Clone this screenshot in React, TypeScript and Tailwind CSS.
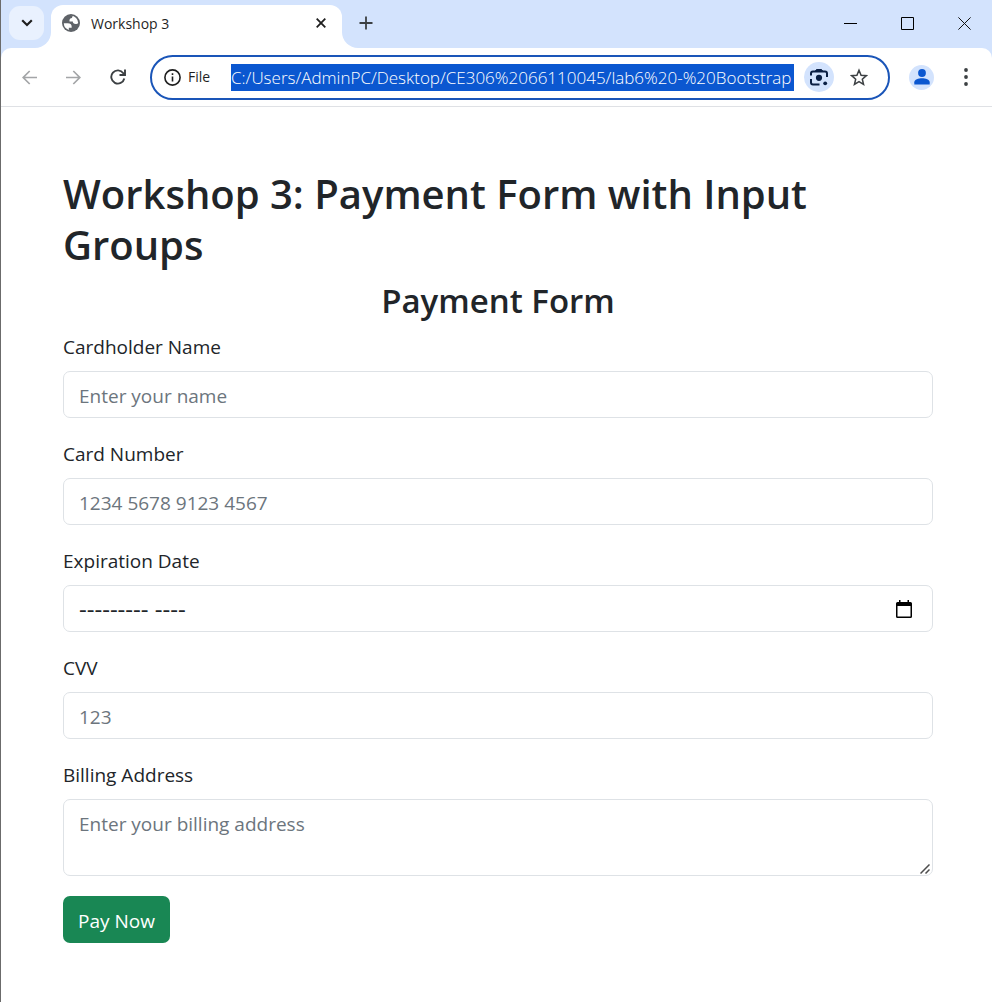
import React from "react";

const field =
  "block h-[47px] w-full rounded-[7px] border border-[#dee2e6] bg-white px-[15px] pt-[2px] text-[19px] leading-[30px] text-[#212529] placeholder:text-[#6c757d] outline-none";

function Field({ id, label, children }: { id: string; label: string; children: React.ReactNode }) {
  return (
    <div className="mb-5">
      <label htmlFor={id} className="mb-2 block text-[19px] leading-8">
        {label}
      </label>
      {children}
    </div>
  );
}

function TabStrip() {
  return (
    <div className="flex h-12 items-end bg-[#d3e3fd]">
      <button aria-label="Search tabs" className="relative z-10 mb-2 ml-2 flex h-[34px] w-[35px] items-center justify-center rounded-[11px] bg-[#e9f1fe]">
        <svg width="12" height="8" viewBox="0 0 12 8" fill="none" stroke="#1f1f1f" strokeWidth="2.2">
          <path d="M1.2 1.3 6 6l4.800-4.700" />
        </svg>
      </button>
      <div className="relative ml-[7px] flex h-[43px] w-[291px] items-start rounded-t-[12px] bg-white pt-2 pr-[11px] pl-[11px]">
        <div className="absolute bottom-0 -left-4 h-4 w-4 bg-white">
          <div className="h-4 w-4 rounded-br-[16px] bg-[#d3e3fd]" />
        </div>
        <div className="absolute -right-4 bottom-0 h-4 w-4 bg-white">
          <div className="h-4 w-4 rounded-bl-[16px] bg-[#d3e3fd]" />
        </div>
        <svg width="18" height="18" viewBox="0 0 18 18" className="mt-px">
          <circle cx="9" cy="9" r="9" fill="#5f6368" />
          <path
            d="M9.800 1.800C8.600 2.200 8.100 2.900 8.100 3.900c-2.200 0-3.300 1.300-3 4 .1.500.6.900 1.200.9H7.900c.2 1.900 1.300 2.700 3.300 2.700 1.500 0 2.700-.4 3.600-1.500l1.300.1A7.200 7.200 0 0 1 6.800 15.900V13.700h2.900c.4-3-1-4.500-4-4.600H1.800a7.200 7.200 0 0 1 8-7.300Z"
            fill="none"
          />
          <path
            d="M1.800 9.300H5.600c3 0 4.400 1.500 4.100 4.400H6.800v2.200A7.200 7.200 0 0 1 1.800 9.300ZM9 1.800a7.200 7.200 0 0 1 7.200 7.200c-.6.700-1.300 1-2.600 1-1.800 0-2.800-.8-2.800-2.400H7.500c-.3-2.400.6-3.600 2.500-3.600 0-.9.300-1.400.8-1.800Z"
            fill="#fff"
          />
        </svg>
        <span className="ml-[11px] flex-1 text-[14px] leading-[22px] text-[#1f1f1f]">Workshop 3</span>
        <button aria-label="Close tab" className="flex h-5 w-5 items-center justify-center">
          <svg width="10" height="10" viewBox="0 0 10 10" stroke="#1f1f1f" strokeWidth="1.800">
            <path d="m.7.7 8.600 8.600M9.300.7.7 9.300" />
          </svg>
        </button>
      </div>
      <button aria-label="New tab" className="mb-[15px] ml-[14px] flex h-5 w-5 items-center justify-center">
        <svg width="14" height="14" viewBox="0 0 14 14" stroke="#3c4043" strokeWidth="1.800">
          <path d="M7 .5v13M.5 7h13" />
        </svg>
      </button>
      <div className="mb-[11px] ml-auto flex">
        <button aria-label="Minimize" className="flex h-7 w-[57px] items-center justify-center">
          <svg width="13" height="13" viewBox="0 0 13 13" stroke="#000">
            <path d="M0 6.500h13" />
          </svg>
        </button>
        <button aria-label="Maximize" className="flex h-7 w-[57px] items-center justify-center">
          <svg width="13" height="13" viewBox="0 0 13 13" stroke="#000" fill="none">
            <path d="M.5.5h12v12H.5z" />
          </svg>
        </button>
        <button aria-label="Close" className="flex h-7 w-[56px] items-center justify-center">
          <svg width="13" height="13" viewBox="0 0 13 13" stroke="#111">
            <path d="m.4.4 12.200 12.200M12.600.4.4 12.600" />
          </svg>
        </button>
      </div>
    </div>
  );
}

function Toolbar() {
  return (
    <div className="bg-[#d3e3fd]">
      <div className="flex h-[59px] items-center rounded-t-[10px] border-b border-[#dfe1e5] bg-white pr-[14px] pl-4">
        <button aria-label="Back" className="flex h-6 w-6 items-center justify-center">
          <svg width="15" height="15" viewBox="0 0 15 15" fill="none" stroke="#a3a5a7" strokeWidth="1.700">
            <path d="M15 7.500H1.500M7.700 1 1.200 7.500 7.700 14" />
          </svg>
        </button>
        <button aria-label="Forward" className="ml-5 flex h-6 w-6 items-center justify-center">
          <svg width="15" height="15" viewBox="0 0 15 15" fill="none" stroke="#a3a5a7" strokeWidth="1.700">
            <path d="M0 7.500h13.500M7.300 1l6.500 6.500L7.300 14" />
          </svg>
        </button>
        <button aria-label="Reload" className="ml-[21px] flex h-6 w-6 items-center justify-center">
          <svg width="16" height="16" viewBox="0 0 16 16" fill="none" stroke="#3c4043" strokeWidth="1.900">
            <path d="M14.300 9.500A6.600 6.600 0 1 1 13.300 4.200L15 6" />
            <path d="M15 .5V6H9.500" />
          </svg>
        </button>
        <div className="ml-5 flex h-[45px] min-w-0 flex-1 items-center rounded-full border-2 border-[#1a55b8] pr-5 pl-3">
          <svg width="17" height="17" viewBox="0 0 17 17" fill="none" stroke="#1f1f1f" strokeWidth="1.600">
            <circle cx="8.500" cy="8.500" r="7.600" />
            <path d="M8.500 7.400v5M8.500 4.300v1.700" />
          </svg>
          <span className="ml-[7px] w-[43px] shrink-0 text-[14px] leading-5 text-[#1f1f1f]">File</span>
          <input
            aria-label="Address"
            readOnly
            value="C:/Users/AdminPC/Desktop/CE306%2066110045/lab6%20-%20Bootstrap"
            className="h-[27px] min-w-0 flex-1 bg-[#0b57d0] text-[17px] leading-[27px] font-light text-white outline-none"
          />
          <button aria-label="Search with Lens" className="ml-[10px] flex h-[30px] w-[30px] shrink-0 items-center justify-center rounded-full bg-[#d3e3fd]">
            <svg width="18" height="18" viewBox="0 0 18 18" fill="none" stroke="#0a1f44" strokeWidth="2">
              <path d="M1 7.500V5.500Q1 3.500 3 3.500h12q2 0 2 2V9M1 11v3.500q0 2 2 2h6.500" />
              <path d="M5 3.500 6.500 1.500h5L13 3.500Z" fill="#0a1f44" strokeWidth="1" />
              <circle cx="9" cy="9.800" r="3.100" fill="#0a1f44" stroke="none" />
              <circle cx="15.200" cy="15.300" r="1.900" fill="#0a1f44" stroke="none" />
            </svg>
          </button>
          <button aria-label="Bookmark this tab" className="ml-4 flex h-6 w-[18px] shrink-0 items-center justify-center">
            <svg width="19" height="18" viewBox="0 0 19 18" fill="none" stroke="#3c4043" strokeWidth="1.600">
              <path d="m9.500 1.900 2.200 5.200 5.500.5-4.200 3.700 1.300 5.500-4.800-2.900-4.800 2.900L6 11.300 1.800 7.600l5.500-.5Z" />
            </svg>
          </button>
        </div>
        <button aria-label="Profile" className="ml-[19px] flex h-[25px] w-[25px] items-center justify-center rounded-full bg-[#d3e3fd]">
          <svg width="16" height="16" viewBox="0 0 16 16" fill="#0b57d0">
            <circle cx="8" cy="4" r="3.900" />
            <path d="M.3 15.500v-2.300C.3 10.500 4.500 9.200 8 9.200s7.700 1.300 7.700 4v2.300Z" />
          </svg>
        </button>
        <button aria-label="Menu" className="ml-5 flex h-6 w-6 items-center justify-center">
          <svg width="4" height="18" viewBox="0 0 4 18" fill="#3c4043">
            <circle cx="2" cy="2" r="1.900" />
            <circle cx="2" cy="9" r="1.900" />
            <circle cx="2" cy="16" r="1.900" />
          </svg>
        </button>
      </div>
    </div>
  );
}

export default function App() {
  return (
    <div className="min-h-screen border-l border-[#6b6b6b] bg-white font-['Open_Sans','Noto_Sans',sans-serif] text-[#212529]">
      <TabStrip />
      <Toolbar />
      <main className="pt-[61px] pr-[59px] pb-[59px] pl-[62px]">
        <h1 className="mb-[11px] text-[40px] leading-[51px] font-semibold">Workshop 3: Payment Form with Input Groups</h1>
        <form onSubmit={(e) => e.preventDefault()}>
          <h2 className="mb-[10px] text-center text-[33px] leading-10 font-semibold">Payment Form</h2>
          <Field id="name" label="Cardholder Name">
            <input id="name" type="text" placeholder="Enter your name" className={field} />
          </Field>
          <Field id="number" label="Card Number">
            <input id="number" type="text" placeholder="1234 5678 9123 4567" className={field} />
          </Field>
          <Field id="expiry" label="Expiration Date">
            <div className="flex h-[47px] w-full items-center rounded-[7px] border border-[#dee2e6] pr-4 pl-[15px]">
              <input
                id="expiry"
                type="text"
                defaultValue="--------- ----"
                className="min-w-0 flex-1 bg-transparent text-[24px] leading-[30px] outline-none"
              />
              <button type="button" aria-label="Show month picker" className="flex h-6 w-6 items-center justify-center">
                <svg width="16" height="18" viewBox="0 0 16 18">
                  <path d="M3 0h1.500v2h7V0H13v2h1.500Q16 2 16 3.500v13Q16 18 14.500 18h-13Q0 18 0 16.500v-13Q0 2 1.500 2H3Zm-1.500 6v10.500h13V6Z" fill="#000" fillRule="evenodd" />
                </svg>
              </button>
            </div>
          </Field>
          <Field id="cvv" label="CVV">
            <input id="cvv" type="text" placeholder="123" className={field} />
          </Field>
          <Field id="address" label="Billing Address">
            <div className="relative">
              <textarea
                id="address"
                rows={2}
                placeholder="Enter your billing address"
                className="block h-[77px] w-full resize-none rounded-[7px] border border-[#dee2e6] bg-white px-[15px] py-[9px] text-[19px] leading-[30px] placeholder:text-[#6c757d] outline-none"
              />
              <svg width="10" height="10" viewBox="0 0 10 10" stroke="#4d4d4d" strokeWidth="1.500" className="pointer-events-none absolute right-[3px] bottom-[2px]">
                <path d="M.5 9.500l9-9M5.500 9.500l4-4" />
              </svg>
            </div>
          </Field>
          <button type="submit" className="h-[47px] rounded-[7px] bg-[#198754] px-[15px] pt-[2px] text-[19px] leading-[30px] text-white">
            Pay Now
          </button>
        </form>
      </main>
    </div>
  );
}
